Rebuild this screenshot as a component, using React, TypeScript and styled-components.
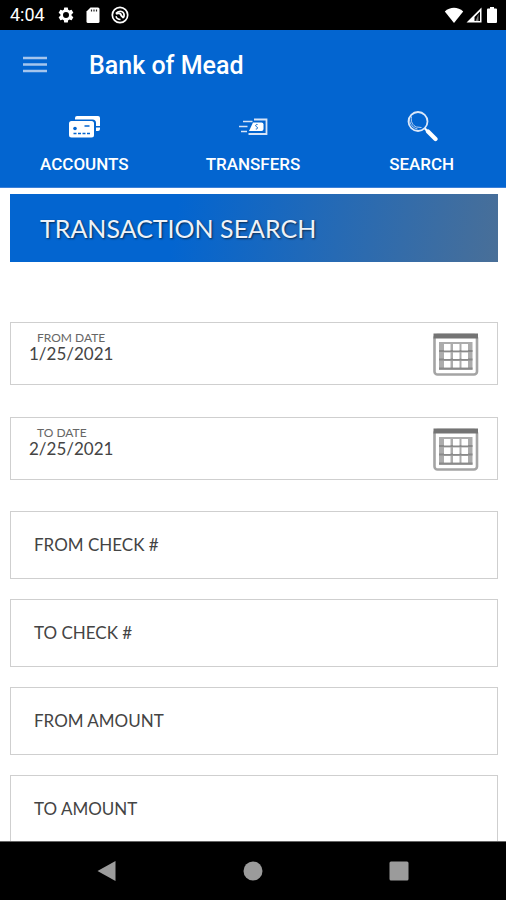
import React, { useState } from "react";
import styled, { createGlobalStyle } from "styled-components";

const GlobalStyle = createGlobalStyle`
  *, *::before, *::after { box-sizing: border-box; }
  body { margin: 0; background: #fff; }
`;

const Screen = styled.div`
  display: flex;
  flex-direction: column;
  height: 100vh;
  overflow: hidden;
  background: #fff;
  font-family: Lato, sans-serif;
`;

const StatusBar = styled.div`
  display: flex;
  flex: none;
  align-items: center;
  gap: 12px;
  height: 30px;
  padding: 0 6px 0 10px;
  background: #000;
  color: #fff;
  font: 400 18px/30px Roboto, sans-serif;
`;

const StatusIcons = styled.div`
  display: flex;
  align-items: center;
  gap: 10px;
`;

const SystemIcons = styled.div`
  display: flex;
  align-items: center;
  gap: 1px;
  margin-left: auto;
`;

const Header = styled.header`
  flex: none;
  background: #0365d0;
  color: #fff;
  font-family: Roboto, sans-serif;
  border-bottom: 1px solid #3c80d8;
`;

const TitleRow = styled.div`
  display: flex;
  align-items: center;
  gap: 42px;
  height: 72px;
  padding: 0 23px;
`;

const IconButton = styled.button`
  display: flex;
  flex: none;
  padding: 0;
  border: 0;
  background: none;
  cursor: pointer;
`;

const AppTitle = styled.h1`
  margin: 0;
  font-size: 25px;
  font-weight: 500;
  line-height: 32px;
`;

const Tabs = styled.nav`
  display: grid;
  grid-template-columns: repeat(3, 1fr);
`;

const Tab = styled.button`
  display: flex;
  flex-direction: column;
  align-items: center;
  gap: 10px;
  height: 85px;
  padding: 8px 0 0;
  border: 0;
  background: none;
  color: #fff;
  font: 500 17px/24px Roboto, sans-serif;
  cursor: pointer;
`;

const Content = styled.main`
  flex: 1;
  min-height: 0;
  padding: 6px 8px 0 10px;
  overflow: hidden;
`;

const Banner = styled.h2`
  margin: 0 0 60px;
  padding: 0 30px;
  background: linear-gradient(100deg, #0365d0 34%, #496f98 100%);
  color: #eef2f8;
  font-size: 25px;
  font-weight: 400;
  line-height: 68px;
  text-shadow: 1px 1px 2px rgba(0, 0, 0, 0.6);
`;

const Form = styled.form`
  display: flex;
  flex-direction: column;
  gap: 20px;
`;

const DateGroup = styled.div`
  display: flex;
  flex-direction: column;
  gap: 32px;
  margin-bottom: 11px;
`;

const FieldBox = styled.div<{ $tall?: boolean }>`
  display: flex;
  align-items: center;
  height: ${(p) => (p.$tall ? 68 : 63)}px;
  padding: 0 ${(p) => (p.$tall ? 23 : 18)}px;
  border: 1px solid #cfcfcf;
  background: #fff;
  color: #444;
`;

const DateText = styled.div`
  display: flex;
  flex: 1;
  flex-direction: column;
  align-self: flex-start;
  min-width: 0;
  padding-top: 8px;
`;

const DateLabel = styled.label`
  padding-left: 8px;
  color: #666;
  font-size: 12px;
  line-height: 14px;
`;

const FieldLabel = styled.label`
  flex: none;
  font-size: 17px;
  line-height: 24px;
`;

const TextInput = styled.input`
  flex: 1;
  min-width: 0;
  padding: 0;
  border: 0;
  outline: 0;
  background: transparent;
  color: #444;
  font: 400 17px/18px Lato, sans-serif;
`;

const NavBar = styled.div`
  display: grid;
  flex: none;
  grid-template-columns: repeat(3, 146px);
  justify-content: center;
  justify-items: center;
  align-items: center;
  height: 59px;
  border-top: 1px solid #666;
  background: #000;
`;

const GearIcon = () => (
  <svg width="18" height="18" viewBox="0 0 24 24" fill="#fff" aria-hidden="true">
    <path d="M19.4 13a7.500 7.500 0 0 0 0-2l2.100-1.650a.5.5 0 0 0 .12-.64l-2-3.460a.5.5 0 0 0-.61-.22l-2.490 1a7.300 7.300 0 0 0-1.690-.98l-.38-2.650A.49.49 0 0 0 14 2h-4a.49.49 0 0 0-.49.420l-.38 2.650c-.61.250-1.170.590-1.690.980l-2.490-1a.5.5 0 0 0-.61.220l-2 3.460a.5.5 0 0 0 .12.640L4.570 11a7.900 7.900 0 0 0 0 2l-2.110 1.650a.5.5 0 0 0-.12.640l2 3.460c.12.220.39.300.61.220l2.490-1c.52.400 1.080.730 1.690.980l.38 2.650c.03.240.24.400.49.400h4c.25 0 .46-.16.49-.4l.38-2.650c.61-.25 1.170-.59 1.690-.98l2.490 1c.23.090.49 0 .61-.22l2-3.460a.5.5 0 0 0-.12-.64zM12 16a4 4 0 1 1 0-8 4 4 0 0 1 0 8z" />
  </svg>
);

const CardIcon = () => (
  <svg width="16" height="18" viewBox="0 0 16 18" aria-hidden="true">
    <path d="M5.500 1.500h7.500A1.500 1.500 0 0 1 14.500 3v12.500A1.500 1.500 0 0 1 13 17H3a1.500 1.500 0 0 1-1.500-1.500V5.500z" fill="#fff" />
    <path d="M6.500 3.500v2M9 3.500v2M11.500 3.500v2" stroke="#222" strokeWidth="1.200" />
  </svg>
);

const SyncIcon = () => (
  <svg width="18" height="18" viewBox="0 0 18 18" fill="none" stroke="#fff" aria-hidden="true">
    <circle cx="9" cy="9" r="7.700" strokeWidth="1.700" />
    <path d="M5 7.500C7 4.500 11.500 4.500 12.800 7.500c.600 1.800.200 3.500-.8 4.500" strokeWidth="1.700" />
    <path d="M5 7.800c2.200-1.200 4.500-.5 5 1.200.3 1 1.500 1.700 2.300 2.800" strokeWidth="2" />
    <path d="M5 10.200c.5 2 2.200 3.200 4.500 3.200" strokeWidth="1.500" />
  </svg>
);

const WifiIcon = () => (
  <svg width="20" height="18" viewBox="0 0 20 18" aria-hidden="true">
    <path d="M.8 5.500C6 .5 14 .5 19.200 5.500L10 17z" fill="#fff" />
  </svg>
);

const SignalIcon = () => (
  <svg width="18" height="18" viewBox="0 0 18 18" aria-hidden="true">
    <path fillRule="evenodd" d="M16.500 1.500v15H1.500zM15 5.500 9.500 11v4H15z" fill="#fff" />
    <path d="M10.500 15 13.500 8v7z" fill="#777" />
  </svg>
);

const BatteryIcon = () => (
  <svg width="16" height="18" viewBox="0 0 16 18" aria-hidden="true">
    <path d="M6 1h4v1.500h2a1 1 0 0 1 1 1V16a1 1 0 0 1-1 1H4a1 1 0 0 1-1-1V3.500a1 1 0 0 1 1-1h2z" fill="#fff" />
  </svg>
);

const MenuIcon = () => (
  <svg width="24" height="20" viewBox="0 0 24 20" aria-hidden="true">
    <path d="M0 2h24M0 8.500h24M0 15h24" stroke="#a5c5ed" strokeWidth="2.400" />
  </svg>
);

const AccountsIcon = () => (
  <svg width="32" height="32" viewBox="0 0 32 32" aria-hidden="true">
    <path d="M7 9.500V8a2 2 0 0 1 2-2h21a2 2 0 0 1 2 2v8h-4v-3a3.500 3.500 0 0 0-3.500-3.500zM28 17.500h4V19a2 2 0 0 1-2 2h-2z" fill="#fff" />
    <rect x="1" y="11" width="25" height="16.500" rx="2.500" fill="#fff" />
    <circle cx="7" cy="18.500" r="1.800" fill="#0365d0" />
    <path d="M16.500 16h5" stroke="#0365d0" strokeWidth="1.500" />
    <path d="M5.500 23.500h17" stroke="#0365d0" strokeWidth="1.400" strokeDasharray="3 1.500" />
  </svg>
);

const TransfersIcon = () => (
  <svg width="32" height="32" viewBox="0 0 32 32" fill="none" aria-hidden="true">
    <path d="M6 11.500h9.500M2 16.500h8.500M4 21.500h6" stroke="#d7e4f7" strokeWidth="1.600" />
    <path d="M17 9.500h12.500v14.500H11.500" stroke="#d7e4f7" strokeWidth="1.800" />
    <path d="M16 12.500h8.500a2 2 0 0 1 2 2V19a2 2 0 0 1-2 2H12z" fill="#fff" />
    <path d="M20.500 14.500c-2-.5-2.500 1.800-.8 2.300 1.500.500 1 2.500-.9 2.200" stroke="#0365d0" strokeWidth="1" />
  </svg>
);

const SearchIcon = () => (
  <svg width="32" height="32" viewBox="0 0 32 32" fill="none" aria-hidden="true">
    <circle cx="12" cy="11.500" r="9.500" stroke="#dce8f9" strokeWidth="1.800" />
    <path d="M5.500 6.500c-1 5 1 9 5 10.500l5 .5M3.500 10c.500 4.500 3.500 8 8 9" stroke="#b9d1f2" strokeWidth="1" />
    <path d="m19 18.500 3 3.500" stroke="#fff" strokeWidth="2" />
    <path d="m22 21.500 7.500 7.500" stroke="#fff" strokeWidth="4.200" strokeLinecap="round" />
  </svg>
);

const CalendarIcon = () => (
  <svg width="46" height="44" viewBox="0 0 46 44" aria-hidden="true">
    <rect x="1.500" y="3" width="42.500" height="39.500" rx="3" fill="#fff" stroke="#a4a4a4" strokeWidth="2.600" />
    <path d="M.500 1.500h44.500v5H.500z" fill="#747474" />
    <rect x="6" y="10" width="33.500" height="28" fill="#acacac" />
    <path d="M6 19h33.500M6 27.500h33.500M6 36.500h33.500" stroke="#8a8a8a" strokeWidth="2" />
    <g fill="#fff">
      <rect x="11" y="12" width="6.500" height="6.500" /><rect x="20" y="12" width="6.500" height="6.500" /><rect x="28.500" y="12" width="6.500" height="6.500" />
      <rect x="11" y="20.500" width="6.500" height="6.500" /><rect x="20" y="20.500" width="6.500" height="6.500" /><rect x="28.500" y="20.500" width="6.500" height="6.500" />
      <rect x="11" y="29" width="6.500" height="6.500" /><rect x="20" y="29" width="6.500" height="6.500" /><rect x="28.500" y="29" width="6.500" height="6.500" />
    </g>
  </svg>
);

const tabs = [
  { label: "ACCOUNTS", Icon: AccountsIcon },
  { label: "TRANSFERS", Icon: TransfersIcon },
  { label: "SEARCH", Icon: SearchIcon },
];

const textFields = [
  { id: "from-check", label: "FROM CHECK #" },
  { id: "to-check", label: "TO CHECK #" },
  { id: "from-amount", label: "FROM AMOUNT" },
  { id: "to-amount", label: "TO AMOUNT" },
];

function DateField({ id, label, initial }: { id: string; label: string; initial: string }) {
  const [value, setValue] = useState(initial);
  return (
    <FieldBox>
      <DateText>
        <DateLabel htmlFor={id}>{label}</DateLabel>
        <TextInput id={id} value={value} onChange={(e) => setValue(e.target.value)} />
      </DateText>
      <IconButton type="button" aria-label={`Choose ${label.toLowerCase()}`}>
        <CalendarIcon />
      </IconButton>
    </FieldBox>
  );
}

export default function App() {
  return (
    <Screen>
      <GlobalStyle />
      <StatusBar>
        <span>4:04</span>
        <StatusIcons>
          <GearIcon />
          <CardIcon />
          <SyncIcon />
        </StatusIcons>
        <SystemIcons>
          <WifiIcon />
          <SignalIcon />
          <BatteryIcon />
        </SystemIcons>
      </StatusBar>
      <Header>
        <TitleRow>
          <IconButton type="button" aria-label="Menu">
            <MenuIcon />
          </IconButton>
          <AppTitle>Bank of Mead</AppTitle>
        </TitleRow>
        <Tabs>
          {tabs.map(({ label, Icon }) => (
            <Tab key={label} type="button">
              <Icon />
              {label}
            </Tab>
          ))}
        </Tabs>
      </Header>
      <Content>
        <Banner>TRANSACTION SEARCH</Banner>
        <Form>
          <DateGroup>
            <DateField id="from-date" label="FROM DATE" initial="1/25/2021" />
            <DateField id="to-date" label="TO DATE" initial="2/25/2021" />
          </DateGroup>
          {textFields.map(({ id, label }) => (
            <FieldBox key={id} $tall>
              <FieldLabel htmlFor={id}>{label}</FieldLabel>
              <TextInput id={id} />
            </FieldBox>
          ))}
        </Form>
      </Content>
      <NavBar>
        <IconButton type="button" aria-label="Back">
          <svg width="20" height="22" viewBox="0 0 20 22" aria-hidden="true">
            <path d="M18.500 1v20L.500 11z" fill="#9b9b9b" />
          </svg>
        </IconButton>
        <IconButton type="button" aria-label="Home">
          <svg width="20" height="20" viewBox="0 0 20 20" aria-hidden="true">
            <circle cx="10" cy="10" r="9.500" fill="#9b9b9b" />
          </svg>
        </IconButton>
        <IconButton type="button" aria-label="Recent apps">
          <svg width="20" height="20" viewBox="0 0 20 20" aria-hidden="true">
            <rect x="0.500" y="0.500" width="19" height="19" rx="1.500" fill="#9b9b9b" />
          </svg>
        </IconButton>
      </NavBar>
    </Screen>
  );
}
